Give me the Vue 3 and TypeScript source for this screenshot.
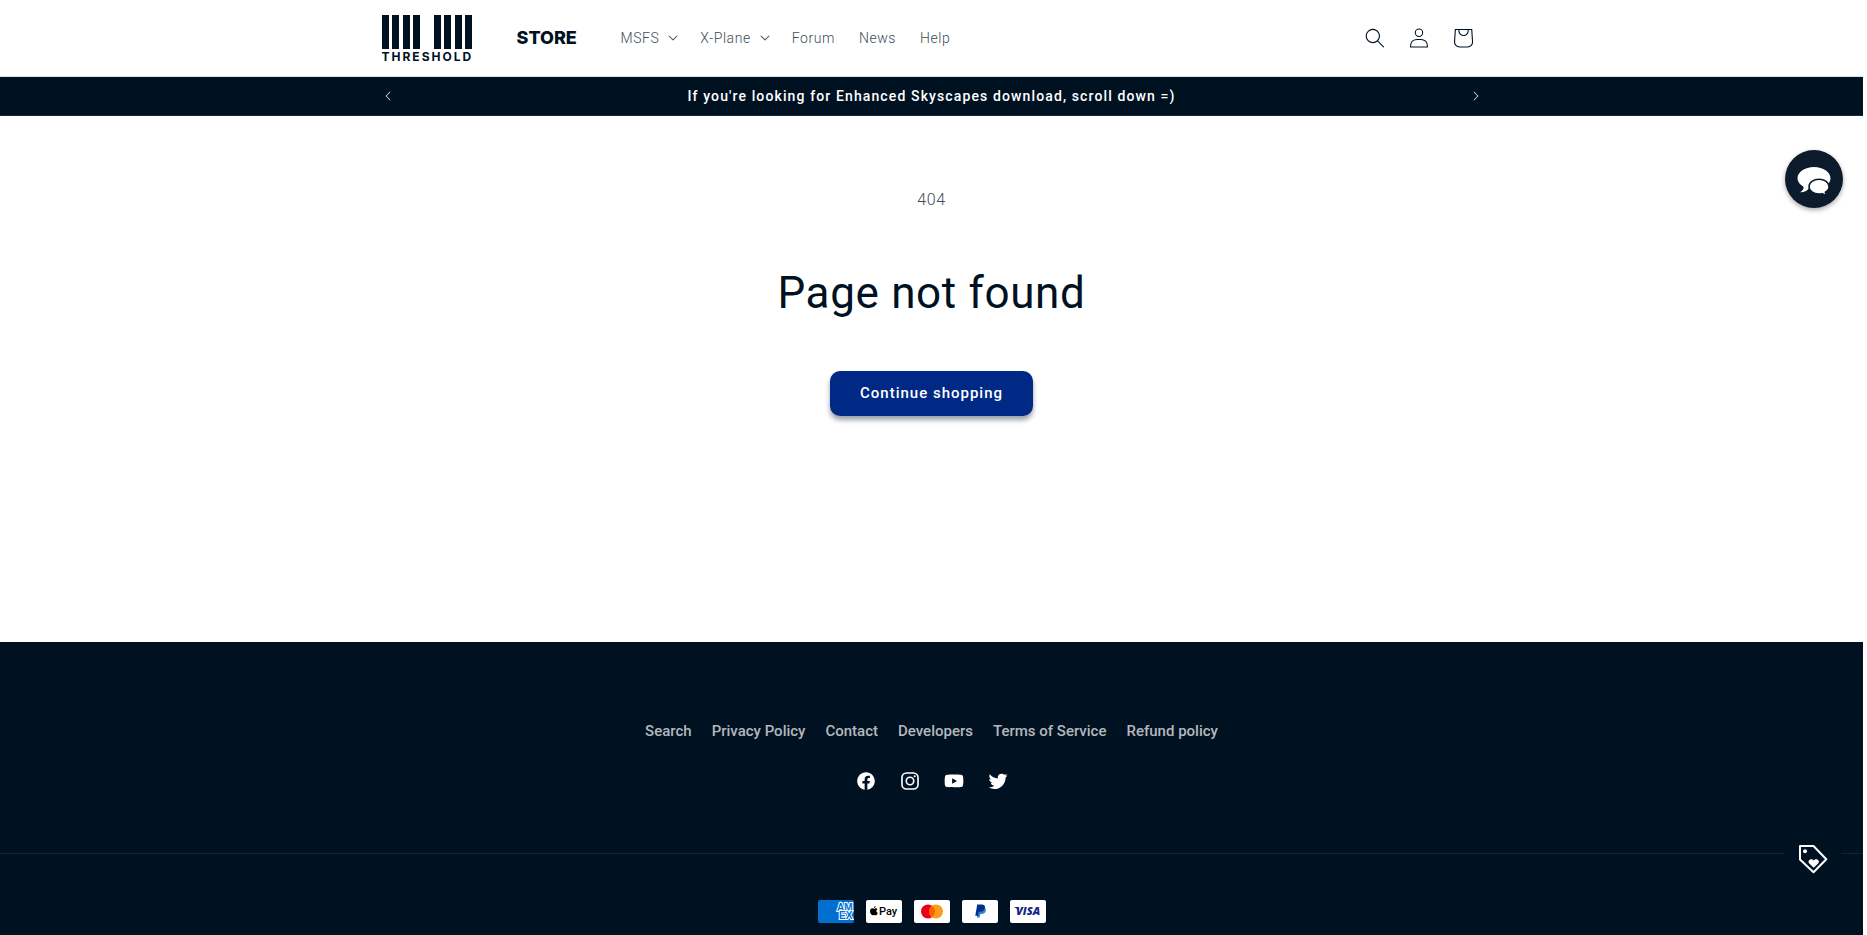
<script setup lang="ts">
interface NavItem {
  label: string
  menu: boolean
}

const navItems: NavItem[] = [
  { label: 'MSFS', menu: true },
  { label: 'X-Plane', menu: true },
  { label: 'Forum', menu: false },
  { label: 'News', menu: false },
  { label: 'Help', menu: false },
]

const footerLinks: string[] = [
  'Search',
  'Privacy Policy',
  'Contact',
  'Developers',
  'Terms of Service',
  'Refund policy',
]

const logoBars: number[] = [0, 10, 21, 31, 52, 62, 73, 83]
</script>

<template>
  <div class="page">
    <header class="header">
      <div class="container header-row">
        <a class="logo" href="#" aria-label="Threshold Store">
          <span class="logo-mark">
            <svg class="logo-bars" viewBox="0 0 90 34" aria-hidden="true">
              <rect v-for="x in logoBars" :key="x" :x="x" y="0" width="7" height="34" />
            </svg>
            <span class="logo-name">THRESHOLD</span>
          </span>
          <span class="logo-store">STORE</span>
        </a>
        <nav class="nav" aria-label="Main">
          <template v-for="item in navItems" :key="item.label">
            <button v-if="item.menu" class="nav-item nav-menu" type="button" aria-haspopup="true">
              {{ item.label }}
              <svg class="caret" viewBox="0 0 10 6" aria-hidden="true">
                <path d="M9.354.646a.5.5 0 00-.708 0L5 4.293 1.354.646a.5.5 0 00-.708.708l4 4a.5.5 0 00.708 0l4-4a.5.5 0 000-.708z" />
              </svg>
            </button>
            <a v-else class="nav-item" href="#">{{ item.label }}</a>
          </template>
        </nav>
        <div class="tools">
          <button class="tool" type="button" aria-label="Search">
            <svg class="icon-tool" viewBox="0 0 18 19" aria-hidden="true">
              <path fill-rule="evenodd" d="M11.03 11.68A5.784 5.784 0 112.85 3.5a5.784 5.784 0 018.18 8.18zm.26 1.12a6.78 6.78 0 11.72-.7l5.4 5.4a.5.5 0 11-.71.7l-5.41-5.4z" />
            </svg>
          </button>
          <a class="tool" href="#" aria-label="Log in">
            <svg class="icon-tool" viewBox="0 0 18 19" aria-hidden="true">
              <path fill-rule="evenodd" d="M6 4.5a3 3 0 116 0 3 3 0 01-6 0zm3-4a4 4 0 100 8 4 4 0 000-8zm5.58 12.15c1.12.82 1.83 2.24 1.91 4.85H1.51c.08-2.6.79-4.03 1.9-4.85C4.66 11.75 6.5 11.5 9 11.5s4.35.26 5.58 1.15zM9 10.5c-2.5 0-4.65.24-6.17 1.35C1.27 12.98.5 14.93.5 18v.5h17V18c0-3.07-.77-5.02-2.33-6.15-1.52-1.1-3.67-1.35-6.17-1.35z" />
            </svg>
          </a>
          <a class="tool" href="#" aria-label="Cart">
            <svg class="icon-cart" viewBox="0 0 40 40" aria-hidden="true">
              <path fill-rule="evenodd" d="M15.75 11.8h-3.16l-.77 11.6a5 5 0 0 0 4.99 5.34h7.38a5 5 0 0 0 4.99-5.33l-.78-11.61zm0 1h-2.22l-.71 10.67a4 4 0 0 0 3.99 4.27h7.38a4 4 0 0 0 4-4.27l-.72-10.67h-2.22v.63a4.75 4.75 0 1 1-9.5 0zm8.5 0h-7.5v.63a3.75 3.75 0 1 0 7.5 0z" />
            </svg>
          </a>
        </div>
      </div>
    </header>

    <section class="announcement" aria-label="Announcement">
      <div class="container announcement-row">
        <button class="slide" type="button" aria-label="Previous announcement">
          <svg class="caret slide-prev" viewBox="0 0 10 6" aria-hidden="true">
            <path d="M9.354.646a.5.5 0 00-.708 0L5 4.293 1.354.646a.5.5 0 00-.708.708l4 4a.5.5 0 00.708 0l4-4a.5.5 0 000-.708z" />
          </svg>
        </button>
        <p class="announcement-text">If you're looking for Enhanced Skyscapes download, scroll down =)</p>
        <button class="slide" type="button" aria-label="Next announcement">
          <svg class="caret slide-next" viewBox="0 0 10 6" aria-hidden="true">
            <path d="M9.354.646a.5.5 0 00-.708 0L5 4.293 1.354.646a.5.5 0 00-.708.708l4 4a.5.5 0 00.708 0l4-4a.5.5 0 000-.708z" />
          </svg>
        </button>
      </div>
    </section>

    <main class="main">
      <p class="code">404</p>
      <h1 class="title">Page not found</h1>
      <a class="continue" href="#">Continue shopping</a>
    </main>

    <footer class="footer">
      <div class="footer-top">
        <nav class="footer-links" aria-label="Footer">
          <a v-for="link in footerLinks" :key="link" class="footer-link" href="#">{{ link }}</a>
        </nav>
        <div class="social">
          <a class="social-link" href="#" aria-label="Facebook">
            <svg class="icon-social" viewBox="0 0 20 20" aria-hidden="true">
              <path d="M18 10.049C18 5.603 14.419 2 10 2c-4.419 0-8 3.603-8 8.049C2 14.067 4.925 17.396 8.75 18v-5.624H6.719v-2.328h2.03V8.275c0-2.017 1.195-3.132 3.023-3.132.874 0 1.79.158 1.79.158v1.98h-1.009c-.994 0-1.303.621-1.303 1.258v1.51h2.219l-.355 2.326H11.25V18c3.825-.604 6.75-3.933 6.75-7.951Z" />
            </svg>
          </a>
          <a class="social-link" href="#" aria-label="Instagram">
            <svg class="icon-social" viewBox="0 0 20 20" aria-hidden="true">
              <rect class="line" x="2.7" y="2.7" width="14.6" height="14.6" rx="4.2" />
              <circle class="line" cx="10" cy="10" r="3.4" />
              <circle cx="14.3" cy="5.7" r="1" />
            </svg>
          </a>
          <a class="social-link" href="#" aria-label="YouTube">
            <svg class="icon-social" viewBox="0 0 20 20" aria-hidden="true">
              <path fill-rule="evenodd" d="M18.16 5.87c.34 1.309.34 4.08.34 4.08s0 2.771-.34 4.08a2.125 2.125 0 0 1-1.53 1.53c-1.309.34-6.63.34-6.63.34s-5.321 0-6.63-.34a2.125 2.125 0 0 1-1.53-1.53c-.34-1.309-.34-4.08-.34-4.08s0-2.771.34-4.08a2.173 2.173 0 0 1 1.53-1.53C4.679 4 10 4 10 4s5.321 0 6.63.34a2.173 2.173 0 0 1 1.53 1.53ZM8.3 12.5l4.42-2.55L8.3 7.4v5.1Z" />
            </svg>
          </a>
          <a class="social-link" href="#" aria-label="Twitter">
            <svg class="icon-social" viewBox="0 0 20 20" aria-hidden="true">
              <path d="M18.608 4.967a7.364 7.364 0 0 1-1.758 1.828c0 .05 0 .13.02.23l.02.232a10.014 10.014 0 0 1-1.697 5.565 11.023 11.023 0 0 1-2.029 2.29 9.13 9.13 0 0 1-2.832 1.607 10.273 10.273 0 0 1-8.94-.985c.342.02.613.04.834.04 1.647 0 3.114-.502 4.4-1.506a3.616 3.616 0 0 1-3.315-2.46c.528.128 1.08.107 1.597-.061a3.485 3.485 0 0 1-2.029-1.216 3.385 3.385 0 0 1-.803-2.23v-.03c.462.242.984.372 1.587.402A3.465 3.465 0 0 1 2.116 5.76c0-.612.14-1.205.452-1.798a9.723 9.723 0 0 0 3.214 2.612A10.044 10.044 0 0 0 9.88 7.649a3.013 3.013 0 0 1-.13-.804c0-.974.34-1.808 1.034-2.49a3.466 3.466 0 0 1 2.561-1.035 3.505 3.505 0 0 1 2.551 1.104 6.812 6.812 0 0 0 2.24-.853 3.415 3.415 0 0 1-1.547 1.948 7.732 7.732 0 0 0 2.02-.542v-.01Z" />
            </svg>
          </a>
        </div>
      </div>
      <div class="footer-bottom">
        <ul class="payments" aria-label="Payment methods">
          <li>
            <svg class="pay" viewBox="0 0 36 23" role="img" aria-label="American Express">
              <rect width="36" height="23" rx="2" fill="#006fcf" />
              <g class="pay-amex">
                <text x="19" y="11">AM</text>
                <text x="21" y="19">EX</text>
              </g>
            </svg>
          </li>
          <li>
            <svg class="pay" viewBox="0 0 36 23" role="img" aria-label="Apple Pay">
              <rect width="36" height="23" rx="2" fill="#fff" />
              <path d="M9.7 6c.1.9-.8 2-1.8 2-.1-1 .8-1.9 1.8-2ZM11.3 9.300c-1.4.9-1.1 3 .4 3.600-.4 1.200-1.100 2.400-2 2.400-.6 0-.9-.4-1.600-.4s-1 .4-1.600.4c-1.200 0-2.500-2.400-2.500-4.200 0-1.900 1.200-2.900 2.400-2.900.7 0 1.200.5 1.700.5.500 0 1.100-.5 2-.5.500 0 1 .3 1.200 1.100Z" fill="#000" />
              <text class="pay-apple" x="13" y="15">Pay</text>
            </svg>
          </li>
          <li>
            <svg class="pay" viewBox="0 0 36 23" role="img" aria-label="Mastercard">
              <rect width="36" height="23" rx="2" fill="#fff" />
              <circle cx="14" cy="11.5" r="7" fill="#eb001b" />
              <circle cx="22" cy="11.5" r="7" fill="#f79e1b" />
              <path d="M18 5.75a7 7 0 0 1 0 11.5 7 7 0 0 1 0-11.5Z" fill="#ff5f00" />
            </svg>
          </li>
          <li>
            <svg class="pay" viewBox="0 0 36 23" role="img" aria-label="PayPal">
              <rect width="36" height="23" rx="2" fill="#fff" />
              <path d="M16.5 7h5c2 .5 2.7 2 2.2 3.900-.6 2.200-2.200 3-4.300 3h-1l-.7 3.600h-2.900Z" fill="#3086c8" />
              <path d="M15.2 4.5h4.6c2.5 0 3.6 1.500 3.100 3.600-.5 2.500-2.200 3.600-4.600 3.600h-1.500l-.7 4h-2.800Z" fill="#003087" />
            </svg>
          </li>
          <li>
            <svg class="pay" viewBox="0 0 36 23" role="img" aria-label="Visa">
              <rect width="36" height="23" rx="2" fill="#fff" />
              <path d="M4 7h4l1 3Z" fill="#142688" />
              <text class="pay-visa" x="6" y="15">VISA</text>
            </svg>
          </li>
        </ul>
      </div>
    </footer>

    <button class="bubble chat" type="button" aria-label="Open chat">
      <svg class="icon-chat" viewBox="0 0 34 30" aria-hidden="true">
        <path d="M17 1C7.800 1 .5 6 .5 12.300c0 3.500 2.400 6.500 6 8.500.4 2-.8 4-3.500 5.500 4 .2 6.800-1.300 8.600-3.500 1.700.4 3.500.6 5.400.6 9.200 0 16.500-5 16.500-11.200S26.200 1 17 1Z" />
        <path class="chat-front" d="M22 13.300c-5.600 0-10 3.300-10 7.400s4.400 7.300 10 7.300c1.200 0 2.300-.1 3.300-.4 1.300 1.200 2.900 1.600 4.600 1.400-1.200-.8-1.700-1.700-1.600-2.800 2.300-1.300 3.700-3.300 3.700-5.500 0-4.100-4.500-7.400-10-7.400Z" />
      </svg>
    </button>
    <button class="bubble rewards" type="button" aria-label="Open rewards">
      <svg class="icon-tag" viewBox="0 0 30 30" aria-hidden="true">
        <path class="tag-line" d="M2 2h13.500L28.300 15.300 15.500 28.200 2 15.500Z" />
        <circle cx="7" cy="7.300" r="2" />
        <path d="M15.700 23.800l-4.400-4.200c-2.600-2.900 1.900-6.200 4.400-3 2.500-3.200 7 .1 4.400 3Z" />
      </svg>
    </button>
  </div>
</template>

<style>
body {
  margin: 0;
  background: #fff;
}
</style>

<style scoped>
.page {
  display: flex;
  flex-direction: column;
  box-sizing: border-box;
  min-height: 100vh;
  padding-right: 4px;
  color: #001122;
  font-family: Roboto, "Liberation Sans", sans-serif;
}

button {
  padding: 0;
  border: 0;
  background: none;
  color: inherit;
  font: inherit;
  letter-spacing: inherit;
  cursor: pointer;
}

a {
  color: inherit;
  text-decoration: none;
}

svg {
  display: block;
  fill: currentColor;
}

.container {
  box-sizing: border-box;
  width: 100%;
  max-width: 1200px;
  margin: 0 auto;
  padding: 0 50px;
}

.header {
  border-bottom: 1px solid #e0e2e4;
}

.header-row {
  display: flex;
  align-items: center;
  height: 76px;
}

.logo {
  display: flex;
  align-items: center;
  gap: 44px;
  width: 199px;
  margin-right: 28px;
}

.logo-mark {
  display: flex;
  flex-direction: column;
  gap: 3px;
  width: 91px;
}

.logo-bars {
  width: 90px;
  height: 34px;
}

.logo-name {
  font: 700 12px/9px Inter, "Liberation Sans", sans-serif;
  letter-spacing: 2px;
  white-space: nowrap;
}

.logo-store {
  font: 800 18px/20px Inter, "Liberation Sans", sans-serif;
}

.nav {
  display: flex;
  align-items: center;
}

.nav-item {
  display: flex;
  align-items: center;
  gap: 9px;
  padding: 12px;
  color: #404c59;
  font-size: 14px;
  font-weight: 300;
  line-height: 20px;
  letter-spacing: 0.04em;
}

.nav-menu {
  padding-right: 10px;
}

.caret {
  width: 10px;
  height: 6px;
}

.tools {
  display: flex;
  margin-left: auto;
  margin-right: -3px;
}

.tool {
  display: flex;
  align-items: center;
  justify-content: center;
  width: 44px;
  height: 44px;
}

.icon-tool {
  width: 20px;
  height: 20px;
}

.icon-cart {
  width: 44px;
  height: 44px;
}

.announcement {
  border-bottom: 1px solid #1a2837;
  background: #001122;
  color: #fff;
}

.announcement-row {
  display: flex;
  align-items: center;
  justify-content: space-between;
  height: 38px;
  padding: 0 34px;
}

.announcement-text {
  margin: 0;
  font-size: 14px;
  font-weight: 500;
  line-height: 20px;
  letter-spacing: 0.08em;
}

.slide {
  display: flex;
  align-items: center;
  justify-content: center;
  width: 44px;
  height: 38px;
  color: #c4c8cc;
}

.slide-prev {
  transform: rotate(90deg);
}

.slide-next {
  transform: rotate(-90deg);
}

.main {
  display: flex;
  flex: 1;
  flex-direction: column;
  align-items: center;
  padding-top: 70px;
}

.code {
  margin: 0;
  color: #404c59;
  font-size: 16px;
  font-weight: 300;
  line-height: 28px;
  letter-spacing: 0.04em;
}

.title {
  margin: 49px 0 48px;
  font-size: 44px;
  font-weight: 400;
  line-height: 60px;
  letter-spacing: 0.015em;
}

.continue {
  padding: 0 30px;
  border-radius: 10px;
  background: #002885;
  box-shadow: 0 4px 5px rgba(0, 17, 34, 0.4);
  color: #fff;
  font-size: 15px;
  font-weight: 500;
  line-height: 45px;
  letter-spacing: 1px;
}

.footer {
  background: #001122;
  color: #fff;
}

.footer-top {
  display: flex;
  flex-direction: column;
  align-items: center;
  gap: 18px;
  padding: 79px 0 50px;
}

.footer-links {
  display: flex;
  gap: 20px;
}

.footer-link {
  color: #b3b8bc;
  font-size: 15px;
  font-weight: 500;
  line-height: 20px;
}

.social {
  display: flex;
}

.social-link {
  display: flex;
  align-items: center;
  justify-content: center;
  width: 44px;
  height: 44px;
}

.icon-social {
  width: 22px;
  height: 22px;
}

.line {
  fill: none;
  stroke: currentColor;
  stroke-width: 1.5;
}

.footer-bottom {
  padding: 46px 0 12px;
  border-top: 1px solid #142434;
}

.payments {
  display: flex;
  justify-content: center;
  gap: 12px;
  margin: 0;
  padding: 0;
  list-style: none;
}

.pay {
  width: 36px;
  height: 23px;
}

.pay-amex {
  fill: #006fcf;
  stroke: #fff;
  stroke-width: 2px;
  paint-order: stroke;
  font: 700 10px "Liberation Sans", Arial, sans-serif;
}

.pay-apple {
  fill: #000;
  font: 500 11px Roboto, sans-serif;
}

.pay-visa {
  fill: #142688;
  font: italic 800 11px "Open Sans", sans-serif;
}

.bubble {
  position: fixed;
  right: 24px;
  display: flex;
  align-items: center;
  justify-content: center;
  box-sizing: border-box;
  width: 58px;
  height: 58px;
  border-radius: 50%;
  color: #fff;
}

.chat {
  top: 150px;
  padding-top: 4px;
  background: #0c1b2c;
  box-shadow: 0 2px 5px rgba(0, 0, 0, 0.35);
}

.icon-chat {
  width: 34px;
  height: 30px;
}

.chat-front {
  stroke: #0c1b2c;
  stroke-width: 1.5;
}

.rewards {
  right: 25px;
  bottom: 47px;
  background: #001122;
}

.icon-tag {
  width: 30px;
  height: 30px;
}

.tag-line {
  fill: none;
  stroke: currentColor;
  stroke-width: 2;
  stroke-linejoin: round;
}
</style>
